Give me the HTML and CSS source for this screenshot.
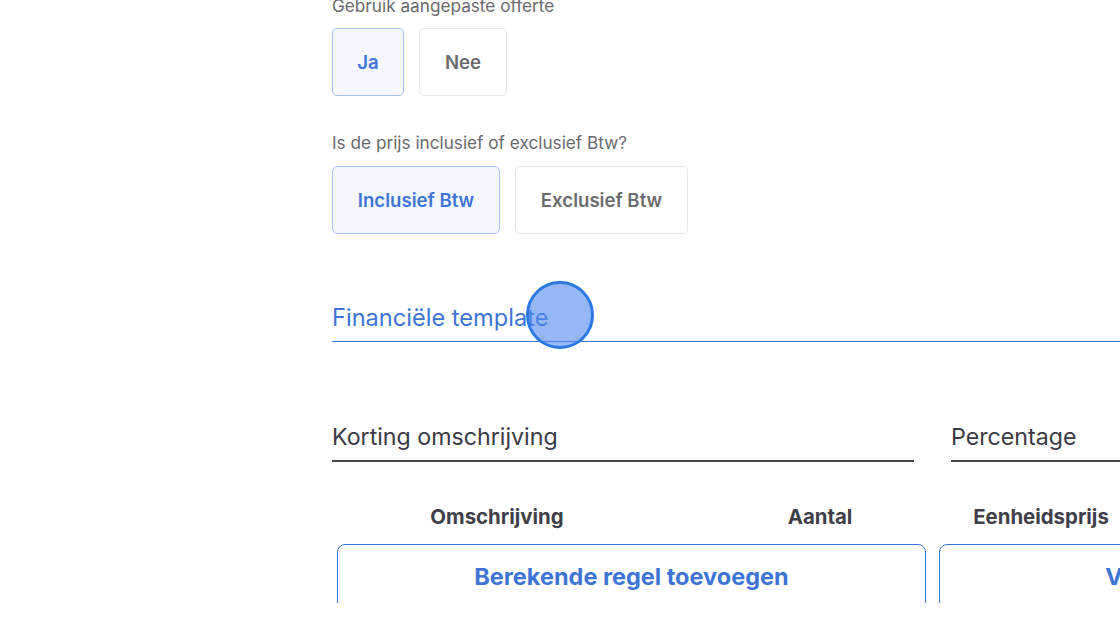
FILE: index.html
```html
<!DOCTYPE html>
<html lang="nl">
<head>
<meta charset="utf-8">
<title>Offerte</title>
<link rel="stylesheet" href="styles.css">
</head>
<body>
<div class="viewport">
  <div class="page">
    <p class="label first">Gebruik aangepaste offerte</p>
    <div class="choices">
      <button class="choice selected w-ja">Ja</button>
      <button class="choice w-nee">Nee</button>
    </div>

    <p class="label second">Is de prijs inclusief of exclusief Btw?</p>
    <div class="choices">
      <button class="choice selected w-incl">Inclusief Btw</button>
      <button class="choice w-excl">Exclusief Btw</button>
    </div>

    <h2 class="section-title">Financiële template</h2>

    <div class="fields">
      <div class="field f-desc">Korting omschrijving</div>
      <div class="field f-pct">Percentage</div>
    </div>

    <div class="headers">
      <div class="hcell">Omschrijving</div>
      <div class="hcell">Aantal</div>
      <div class="hcell">Eenheidsprijs</div>
    </div>

    <div class="actions">
      <div class="action a-calc">Berekende regel toevoegen</div>
      <div class="action a-free">Vaste regel toevoegen</div>
    </div>
  </div>
  <div class="cursor"></div>
</div>
</body>
</html>
```
FILE: styles.css
```css
* { box-sizing: border-box; }
html, body { margin: 0; padding: 0; background: #fff; }
body {
  font-family: Inter, "Noto Sans", "Liberation Sans", sans-serif;
  overflow: hidden;
  width: 1120px;
  height: 630px;
}
.viewport {
  position: relative;
  height: 603px;
  overflow: hidden;
}
.page {
  padding-left: 332px;
  width: 1700px;
}
.label {
  margin: 0;
  font-size: 17.2px;
  line-height: 20px;
  color: #6a6a6e;
}
.label.first { margin-top: -4px; }
.label.second { margin-top: 37px; }
.choices {
  display: flex;
  gap: 15px;
  margin-top: 12px;
}
.label.second + .choices { margin-top: 13px; }
.choice {
  height: 68px;
  border: 1.5px solid #e6e6e8;
  border-radius: 5px;
  background: #fff;
  font-family: inherit;
  font-size: 18.6px;
  font-weight: 600;
  color: #6b6b6f;
  padding: 0;
}
.choice.selected {
  background: #f4f7fd;
  border-color: #a8c1ee;
  color: #3e74d6;
}
.w-ja { width: 72px; }
.w-nee { width: 88px; }
.w-incl { width: 168px; }
.w-excl { width: 173px; }

.section-title {
  margin: 70px 0 0;
  font-size: 23.6px;
  line-height: 28px;
  font-weight: 400;
  color: #3e74d6;
  padding-bottom: 9px;
  border-bottom: 1.5px solid #3d78e2;
}

.fields {
  display: flex;
  gap: 37px;
  margin-top: 81px;
}
.field {
  font-size: 23.2px;
  line-height: 28px;
  color: #3a3a44;
  padding-bottom: 9px;
  border-bottom: 2px solid #45454f;
}
.f-desc { width: 582px; }
.f-pct { width: 600px; }

.headers {
  display: grid;
  grid-template-columns: 330px 316px 126px;
  margin-top: 43px;
}
.hcell {
  display: flex;
  justify-content: center;
  white-space: nowrap;
  font-size: 20.4px;
  line-height: 24px;
  font-weight: 700;
  color: #3f3f4a;
}

.actions {
  display: flex;
  gap: 13px;
  margin-top: 15px;
  margin-left: 5px;
}
.action {
  height: 90px;
  border: 1.5px solid #3e74d6;
  border-radius: 8px;
  padding-top: 19px;
  display: flex;
  justify-content: center;
  white-space: nowrap;
  font-size: 23.5px;
  line-height: 26px;
  font-weight: 700;
  color: #3e74d6;
}
.a-calc { width: 589px; }
.a-free { width: 589px; }

.cursor {
  position: absolute;
  left: 526px;
  top: 281px;
  width: 68px;
  height: 68px;
  border-radius: 50%;
  background: rgba(84, 138, 240, 0.62);
  border: 3px solid #2a78e4;
}
```
